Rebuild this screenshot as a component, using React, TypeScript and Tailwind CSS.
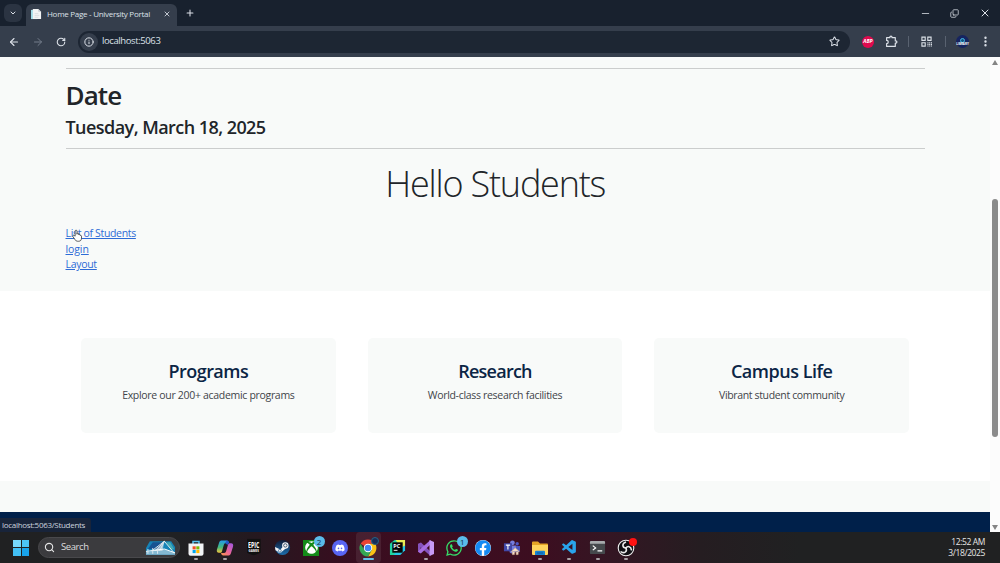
import type { ReactNode } from 'react'
import {
  ArrowLeft,
  ArrowRight,
  ChevronDown,
  Copy,
  Info,
  Minus,
  Plus,
  RotateCw,
  Search,
  Star,
  X,
  EllipsisVertical
} from 'lucide-react'
import { FaDiscord, FaFacebook, FaSteam, FaWhatsapp, FaXbox } from 'react-icons/fa'
import { VscVscode } from 'react-icons/vsc'

const features = [
  { title: 'Programs', text: 'Explore our 200+ academic programs', titleClass: 'tracking-[-0.55px]', textClass: 'tracking-[-0.31px]' },
  { title: 'Research', text: 'World-class research facilities', titleClass: 'tracking-[-0.75px]', textClass: 'tracking-[-0.31px]' },
  { title: 'Campus Life', text: 'Vibrant student community', titleClass: 'tracking-[-0.48px]', textClass: 'tracking-[-0.35px]' }
]

const links = [
  { label: 'List of Students', className: 'tracking-[-0.33px]' },
  { label: 'login', className: 'tracking-[-0.1px]' },
  { label: 'Layout', className: 'tracking-[-0.3px]' }
]

const ChromeLogo = () => (
  <svg viewBox="0 0 20 20" className="size-[18px]">
    <path d="M10 10 1.8 5.3A9.4 9.4 0 0 1 18.1 5.3H10Z" fill="#ea4335" />
    <path d="M10 5.3h8.1A9.4 9.4 0 0 1 10 19.4L14.1 12.3Z" fill="#fbc116" />
    <path d="M1.8 5.3A9.4 9.4 0 0 0 10 19.4l4.1-7.1-8.2 0Z" fill="#34a853" />
    <circle cx="10" cy="10" r="4.7" fill="#fff" />
    <circle cx="10" cy="10" r="3.6" fill="#4285f4" />
  </svg>
)

const StoreLogo = () => (
  <svg viewBox="0 0 18 18" className="size-[18px]">
    <path d="M6 5V2.4h6V5" fill="none" stroke="#57c4f2" strokeWidth="1.5" />
    <path d="M1.5 4.5h15v10.3a2 2 0 0 1-2 2h-11a2 2 0 0 1-2-2Z" fill="#f1f4f6" />
    <path d="M5.6 7.3h3.1v3.1H5.6z" fill="#f25022" />
    <path d="M9.3 7.3h3.1v3.1H9.3z" fill="#7fba00" />
    <path d="M5.6 11h3.1v3.1H5.6z" fill="#00a4ef" />
    <path d="M9.3 11h3.1v3.1H9.3z" fill="#ffb900" />
  </svg>
)

const CopilotLogo = () => (
  <svg viewBox="0 0 18 18" className="size-[18px]">
    <defs>
      <linearGradient id="copilotLeft" x1="0" y1="0" x2="0" y2="1">
        <stop offset="0" stopColor="#249bea" />
        <stop offset=".55" stopColor="#45b97c" />
        <stop offset="1" stopColor="#f5c63c" />
      </linearGradient>
      <linearGradient id="copilotRight" x1="1" y1="0" x2="0" y2="1">
        <stop offset="0" stopColor="#9a55e5" />
        <stop offset=".55" stopColor="#ed6598" />
        <stop offset="1" stopColor="#f99845" />
      </linearGradient>
    </defs>
    <path d="M5.4 1.5h5.2c1.6 0 2 1 2.4 2.5H10C8.4 4 8 5.3 7.5 7L6 12.2c-.3 1-.9 1.6-2 1.6H3c-2 0-2.6-1.5-2-3.5L3 4c.5-1.6 1-2.5 2.4-2.5Z" fill="url(#copilotLeft)" />
    <path d="M12.6 16.5H7.4c-1.6 0-2-1-2.4-2.5h3c1.6 0 2-1.3 2.5-3L12 5.8c.3-1 .9-1.6 2-1.6h1c2 0 2.6 1.5 2 3.5L15 14c-.5 1.6-1 2.5-2.4 2.5Z" fill="url(#copilotRight)" />
    <path d="M10.8 1.5c1.5 0 2 1.2 2.6 2.8-1.1.1-1.4.7-1.8 1.8L9 4Z" fill="#2458ca" />
  </svg>
)

const EpicLogo = () => (
  <div className="flex h-[17px] w-[14px] -translate-y-[0.5px] flex-col items-center bg-[#111] pt-[2px] text-white [clip-path:polygon(0_0,100%_0,100%_84%,50%_100%,0_84%)]">
    <span className="scale-x-[0.65] text-[8px] leading-[8px] font-bold">EPIC</span>
    <span className="text-[3px] leading-[4px] font-bold">GAMES</span>
  </div>
)

const SteamLogo = () => (
  <svg viewBox="0 0 18 18" className="size-[17px]">
    <defs>
      <linearGradient id="steamDisc" x1="0" y1="0" x2="0" y2="1">
        <stop offset="0" stopColor="#101a35" />
        <stop offset="1" stopColor="#1c6fae" />
      </linearGradient>
    </defs>
    <circle cx="9" cy="9" r="8" fill="url(#steamDisc)" />
    <path d="M1 8.6 6.8 11l4.4-4.6 2.4 2.6-5 4.2A2.8 2.8 0 0 1 3.6 13L1.6 12Z" fill="#f4f6f8" />
    <circle cx="12" cy="6.8" r="3.4" fill="#f4f6f8" />
    <circle cx="12" cy="6.8" r="1.8" fill="#f4f6f8" stroke="#16304f" strokeWidth=".8" />
    <circle cx="6.2" cy="12.4" r="1.5" fill="none" stroke="#1a568a" strokeWidth=".7" />
  </svg>
)

const XboxLogo = () => (
  <div className="flex size-[16px] items-center justify-center bg-[#138a18]">
    <FaXbox className="size-[13px] text-white" />
  </div>
)

const DiscordLogo = () => (
  <div className="flex size-[16px] items-center justify-center rounded-full bg-[#5865f2]">
    <FaDiscord className="size-[10px] text-white" />
  </div>
)

const PycharmLogo = () => (
  <svg viewBox="0 0 18 18" className="size-[17px]">
    <path d="M1 5 6 1h7L6 17H1Z" fill="#20d3a0" />
    <path d="M7 1h10v7l-4 2Z" fill="#e9ed55" />
    <path d="M17 7v5l-5 5H5l4-6Z" fill="#22c7e8" />
    <path d="M3.5 3.5h11v11h-11z" fill="#070707" />
    <text x="4.5" y="9" fontSize="5.8" fontWeight="700" fill="#fff">PC</text>
    <path d="M5 12h4" stroke="#fff" />
  </svg>
)

const VisualStudioLogo = () => (
  <svg viewBox="0 0 18 18" className="size-[18px]">
    <path d="M1 4.8 4 3.5l9.5 9V17L3.6 8.2V14L1 12.8Z" fill="#8553bd" />
    <path d="M3.8 14.4 13.5 5.5V1L3.6 9.8 1 12.8Z" fill="#a76de0" />
    <path d="m12.5 1 4.5 2v12l-4.5 2Z" fill="#c79af5" />
  </svg>
)

const FacebookLogo = () => (
  <div className="flex size-[16px] items-center justify-center rounded-full bg-white">
    <FaFacebook className="size-[16px] text-[#148af3]" />
  </div>
)

const TeamsLogo = () => (
  <svg viewBox="0 0 18 18" className="size-[17px]">
    <circle cx="10" cy="4" r="2.5" fill="#747ddd" />
    <circle cx="15" cy="5" r="1.8" fill="#5057c5" />
    <path d="M7 7h7v5a4 4 0 0 1-7 2Z" fill="#747ddd" />
    <path d="M13.5 7.5H18V12a3 3 0 0 1-4 2Z" fill="#4b53bc" />
    <path d="M1 4.5h8.5V13H1z" fill="#4148a8" />
    <path d="M3 6.5h4.5M5.2 6.5V11" stroke="#fff" strokeWidth="1.2" />
    <path d="m8.5 13.5 4.5-4 4.5 4M10 13v3.5h2v-3h2v3h2V13" fill="#f7dfc5" stroke="#d8b697" strokeWidth=".7" />
  </svg>
)

const ExplorerLogo = () => (
  <svg viewBox="0 0 18 18" className="size-[18px]">
    <path d="M1 3.5a1 1 0 0 1 1-1h5l2 2h7a1 1 0 0 1 1 1V9H1Z" fill="#e6a426" />
    <path d="M1 6h16v9a1 1 0 0 1-1 1H2a1 1 0 0 1-1-1Z" fill="#ffd45d" />
    <path d="M4 16v-3.2a1 1 0 0 1 1-1h8a1 1 0 0 1 1 1V16Z" fill="#1683d2" />
    <path d="M6 14h6" stroke="#0c5ba0" />
  </svg>
)

const TerminalLogo = () => (
  <svg viewBox="0 0 18 18" className="size-[17px]">
    <rect x="1" y="2" width="16" height="14" rx="1.3" fill="#45494c" />
    <path d="M1 5V3.3A1.3 1.3 0 0 1 2.3 2h13.4A1.3 1.3 0 0 1 17 3.3V5Z" fill="#a6aaac" />
    <path d="m4 7 3 2.4-3 2.4M9 12.5h5" fill="none" stroke="#fff" strokeWidth="1.3" />
  </svg>
)

const ObsLogo = () => (
  <svg viewBox="0 0 18 18" className="size-[18px]">
    <circle cx="9" cy="9" r="7.8" fill="#101014" stroke="#eee" strokeWidth="1.1" />
    <g fill="none" stroke="#e9e9e9" strokeWidth="1.6" strokeLinecap="round">
      <path d="M8.4 3.2C4.8 4.8 5.2 8.6 9 9" />
      <path d="M14.4 10.8C14 7.3 10.6 6.6 9 9" />
      <path d="M4.2 12.8C7.6 15 10.4 12.4 9 9" />
    </g>
  </svg>
)

const ExtensionsIcon = () => (
  <svg viewBox="0 0 24 24" className="ml-[11px] size-[13px]" fill="none" stroke="currentColor" strokeWidth="2.2" strokeLinejoin="round">
    <path d="M3 5h6V4a2 2 0 0 1 4 0v1h6v6h1a2 2 0 0 1 0 4h-1v6H3v-5a3 3 0 0 0 0-6Z" />
  </svg>
)

const CodeIcon = () => (
  <svg viewBox="0 0 12 12" className="ml-[12px] size-[11px]" fill="none" stroke="currentColor" strokeWidth="1.2">
    <path d="M1 1.2h3.6v3.6H1zM7.4 1.2H11v3.6H7.4zM1 7.4h3.6V11H1z" />
    <path d="M7 7.5h5M7 9.2h5M7 10.9h5" strokeDasharray="1.2 .7" />
  </svg>
)

const Badge = ({ children }: { children: ReactNode }) => (
  <span className="absolute top-[4px] right-[-1px] flex size-[11px] items-center justify-center rounded-full bg-[#5abbea] text-[8px] leading-none text-[#12323f]">
    {children}
  </span>
)

const apps = [
  { id: 'store', icon: <StoreLogo />, running: true },
  { id: 'copilot', icon: <CopilotLogo />, running: true },
  { id: 'epic', icon: <EpicLogo /> },
  { id: 'steam', icon: <SteamLogo /> },
  { id: 'xbox', icon: <XboxLogo />, badge: '2' },
  { id: 'discord', icon: <DiscordLogo /> },
  { id: 'chrome', icon: <ChromeLogo />, active: true },
  { id: 'pycharm', icon: <PycharmLogo /> },
  { id: 'visualstudio', icon: <VisualStudioLogo />, running: true },
  { id: 'whatsapp', icon: <FaWhatsapp className="size-[18px] text-[#36dc68]" />, badge: '1' },
  { id: 'facebook', icon: <FacebookLogo /> },
  { id: 'teams', icon: <TeamsLogo /> },
  { id: 'explorer', icon: <ExplorerLogo />, running: true },
  { id: 'vscode', icon: <VscVscode className="size-[17px] text-[#29a4ec]" />, running: true },
  { id: 'terminal', icon: <TerminalLogo />, running: true },
  { id: 'obs', icon: <ObsLogo />, running: true }
]

const BrowserBar = () => (
  <header className="h-[57px] shrink-0 bg-[#18212e] text-[#dce1e8]">
    {/* Tabs */}
    <div className="flex h-[26px] items-end">
      <button className="mb-[4px] ml-[4px] flex size-[18px] items-center justify-center rounded-md bg-[#2b3442]">
        <ChevronDown className="size-[8px]" strokeWidth={3} />
      </button>
      <div className="ml-[4px] flex h-[22px] w-[151px] items-center rounded-t-[6px] bg-[#353e4c] pb-[2px]">
        <svg viewBox="0 0 12 12" className="ml-[5px] size-[11px]">
          <path d="M0 1h7v10H0z" fill="#9edbe6" />
          <path d="M2 0h6l3 3v8H2z" fill="#f2f4f5" />
          <path d="M8 0v3h3" fill="#c5ccd2" />
          <path d="M4 5h4M4 7h5M4 9h4" stroke="#c9cfd3" strokeWidth=".6" />
        </svg>
        <span className="ml-[5px] w-[108px] text-[8px] tracking-[-0.28px] whitespace-nowrap">Home Page - University Portal</span>
        <X className="ml-[8px] size-[8px]" strokeWidth={2.5} />
      </div>
      <Plus className="mb-[8px] ml-[8px] size-[10px]" strokeWidth={2.5} />
      <div className="mb-[7px] ml-auto flex items-center">
        <Minus className="size-[11px]" strokeWidth={1.7} />
        <Copy className="ml-[19px] size-[9px] -scale-x-100 rotate-180" strokeWidth={2} />
        <X className="mr-[9px] ml-[20px] size-[12px]" strokeWidth={2} />
      </div>
    </div>

    {/* Toolbar */}
    <div className="flex h-[31px] items-center bg-[#353e4c]">
      <ArrowLeft className="ml-[8px] size-[12px]" strokeWidth={2.2} />
      <ArrowRight className="ml-[12px] size-[12px] text-[#747d8b]" strokeWidth={2} />
      <RotateCw className="ml-[12px] size-[10px]" strokeWidth={2.6} />
      <div className="ml-[12px] flex h-[22px] w-[772px] items-center rounded-full bg-[#1d2633]">
        <span className="ml-[2px] flex size-[18px] items-center justify-center rounded-full bg-[#353e4c]">
          <Info className="size-[10px]" strokeWidth={2.4} />
        </span>
        <span className="ml-[4px] text-[9.5px] tracking-[-0.4px]">localhost:5063</span>
        <Star className="mr-[10px] ml-auto size-[11px]" strokeWidth={2.2} />
      </div>
      <span className="ml-[12px] flex size-[12px] items-center justify-center rounded-full bg-[#e00a4e] text-[5px] font-bold text-white italic">ABP</span>
      <ExtensionsIcon />
      <span className="ml-[10px] h-[11px] w-px bg-[#596270]" />
      <CodeIcon />
      <span className="ml-[13px] h-[11px] w-px bg-[#596270]" />
      <span className="ml-[10px] flex size-[13px] flex-col items-center justify-center rounded-full bg-[#162460]">
        <i className="size-[5px] rounded-full border border-[#45b7e6] bg-[#14557e]" />
        <b className="text-[3px] leading-[3px] text-white">LIBRARY</b>
      </span>
      <EllipsisVertical className="ml-[10px] size-[13px]" strokeWidth={2.4} />
    </div>
  </header>
)

const Scrollbar = () => (
  <div className="flex w-[10px] shrink-0 flex-col items-center bg-[#fcfcfc] pt-[3px] pb-[2px]">
    <svg viewBox="0 0 6 5" className="h-[5px] w-[6px] fill-[#858585]"><path d="M3 0 6 5H0Z" /></svg>
    <div className="mt-[134px] h-[238px] w-[6px] rounded-full bg-[#8b8b8b]" />
    <svg viewBox="0 0 6 5" className="mt-auto h-[5px] w-[6px] fill-[#858585]"><path d="M0 0h6L3 5Z" /></svg>
  </div>
)

const Page = () => (
  <main className="relative flex min-w-0 flex-1 flex-col bg-[#f8faf9] text-[#212529]">
    <section className="mr-[65px] ml-[65.5px] h-[234px] shrink-0 pt-[11px]">
      <hr className="border-[#cbcdcd]" />
      <h1 className="mt-[9px] h-[34px] text-[26px] leading-[34px] font-[540] tracking-[-0.9px]">Date</h1>
      <h3 className="mt-[3px] h-[24px] text-[18px] leading-[24px] font-[540] tracking-[-0.55px] whitespace-nowrap">Tuesday, March 18, 2025</h3>
      <hr className="mt-[9px] border-[#cbcdcd]" />
      <h2 className="mt-[11px] h-[48px] text-center text-[36px] leading-[48px] font-light tracking-[-1.2px]">Hello Students</h2>
      <nav className="mt-[16px] flex flex-col items-start pt-px">
        {links.map((link) => (
          <a key={link.label} href="#" className={`h-[15.7px] text-[10.5px] leading-[16px] text-[#2d6bd6] underline ${link.className}`}>
            {link.label}
          </a>
        ))}
      </nav>
    </section>

    <section className="h-[190px] shrink-0 bg-white px-[81px] pt-[47px]">
      <div className="grid grid-cols-3 gap-8">
        {features.map((feature) => (
          <article key={feature.title} className="h-[95px] rounded-[5px] bg-[#f8faf9] pt-[21px] text-center">
            <h3 className={`text-[18px] leading-[24px] font-[540] text-[#0b2545] ${feature.titleClass}`}>{feature.title}</h3>
            <p className={`mt-[4px] text-[10.5px] leading-[16px] text-[#3f4449] ${feature.textClass}`}>{feature.text}</p>
          </article>
        ))}
      </div>
    </section>

    <footer className="mt-auto h-[20px] shrink-0 bg-[#00204a]" />

    {/* Link target shown while hovering */}
    <div className="absolute bottom-0 left-0 flex h-[14px] w-[91px] items-center rounded-tr-[3px] bg-[#18243a] pl-[2px] text-[8px] tracking-[-0.3px] text-[#cbd2df]">
      localhost:5063/Students
    </div>

    {/* Hand pointer */}
    <svg viewBox="0 0 16 20" className="absolute top-[172px] left-[72px] h-[13px] w-[10px]">
      <path
        d="M5 11V3a1.5 1.5 0 0 1 3 0v5V7a1.4 1.4 0 0 1 2.7.3V9a1.3 1.3 0 0 1 2.5.2v1a1.2 1.2 0 0 1 2 1v3c0 3-1.6 5-4.6 5H9c-2 0-3-.8-4-2.4l-3.5-5C.4 10.2 2.3 8.8 3.6 10Z"
        fill="#fff"
        stroke="#34373b"
        strokeWidth="1.3"
      />
    </svg>
  </main>
)

const BridgeArt = () => (
  <svg viewBox="0 0 32 16" className="mr-[3px] ml-auto h-[16px] w-[31px]">
    <path d="M5 1h22l4 6v8H1V8Z" fill="#1683b7" />
    <path d="M8 2h12l-5 7H3Z" fill="#185391" />
    <path d="M22 2h4l4 7-3 1Z" fill="#42a9b5" />
    <path d="M1 12 20 9l11 4v2H1Z" fill="#85b9d2" />
    <path d="M20 1 7 11M20 1l-9 10M20 1l-5 10M20 1l10 12" fill="none" stroke="#f6f7f4" strokeWidth=".9" />
    <path d="M20 1 9 11h9Z" fill="#d5e2ea" opacity=".7" />
    <path d="M1 11.5 20 9l11 4" fill="none" stroke="#fff" />
    <path d="M3 9v5M8 8v6M13 9v5" stroke="#dce7ee" />
  </svg>
)

const Taskbar = () => (
  <div className="flex h-[31px] shrink-0 items-center bg-[linear-gradient(90deg,#202122_0%,#202123_18%,#24191f_25%,#350f1f_33%,#3e0c20_42%,#3c0e20_54%,#341623_61%,#251d21_70%,#202122_80%)] text-white">
    <div className="ml-[13px] grid size-[16px] grid-cols-2 gap-px">
      <i className="bg-[#78d8fb]" />
      <i className="bg-[#4cc5f7]" />
      <i className="bg-[#42c0f5]" />
      <i className="bg-[#18a4ed]" />
    </div>
    <div className="ml-[9px] flex h-[21px] w-[142px] items-center rounded-full border border-[#49494c] bg-[#3b3b3e] pl-[5px]">
      <Search className="size-[11px] text-[#e7e7e7]" strokeWidth={2.4} />
      <span className="ml-[6px] text-[9.5px] tracking-[-0.4px] text-[#dedede]">Search</span>
      <BridgeArt />
    </div>
    <div className="ml-[2px] grid w-[458.7px] grid-cols-16">
      {apps.map((app) => (
        <div key={app.id} className="flex h-[31px] justify-center">
          <div className={`relative flex h-[31px] w-[25px] items-center justify-center ${app.active ? 'rounded bg-white/8' : ''}`}>
            {app.icon}
            {app.badge && <Badge>{app.badge}</Badge>}
            {app.id === 'chrome' && (
              <span className="absolute top-[5px] right-[2px] size-[8px] rounded-full border border-[#276486] bg-[#172c58]" />
            )}
            {app.id === 'obs' && <span className="absolute top-[6px] right-[2px] size-[8px] rounded-full bg-[#ff1212]" />}
            {app.active && <span className="absolute bottom-[3px] h-[2px] w-[11px] rounded-full bg-[#62bfe9]" />}
            {app.running && <span className="absolute bottom-[3px] h-[2px] w-[4px] rounded-full bg-[#aaa3a7]" />}
          </div>
        </div>
      ))}
    </div>
    <div className="mr-[15px] ml-auto text-right text-[8.5px] leading-[10.5px] tracking-[-0.4px] text-[#e7e7e7]">
      <div>12:52 AM</div>
      <div>3/18/2025</div>
    </div>
  </div>
)

const App = () => {
  return (
    <div className="flex h-[563px] w-[1000px] flex-col overflow-hidden font-['Open_Sans','Noto_Sans',sans-serif]">
      <BrowserBar />
      <div className="flex h-[475px] shrink-0">
        <Page />
        <Scrollbar />
      </div>
      <Taskbar />
    </div>
  )
}

export default App
